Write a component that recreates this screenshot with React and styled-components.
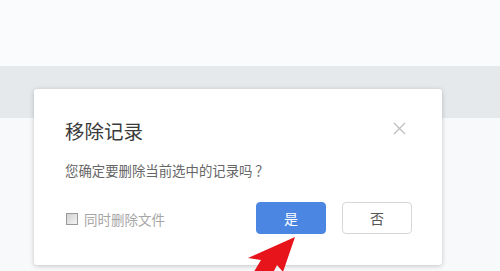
import styled, { createGlobalStyle } from 'styled-components';

const Global = createGlobalStyle`
  html, body { margin: 0; padding: 0; }
  body {
    width: 500px;
    height: 271px;
    overflow: hidden;
    font-family: "Noto Sans CJK SC", "Noto Sans", sans-serif;
  }
`;

const Page = styled.div`
  position: relative;
  width: 500px;
  height: 271px;
  display: flex;
  flex-direction: column;
  background: #f8f9fa;
`;

const TopArea = styled.div`
  height: 66px;
  background: #fafbfc;
`;

const Band = styled.div`
  height: 52px;
  background: #e6e9ec;
`;

const Dialog = styled.div`
  position: absolute;
  left: 34px;
  top: 89px;
  width: 408px;
  height: 176px;
  box-sizing: border-box;
  padding: 27px 30px 31px 31px;
  background: #fff;
  border-radius: 3px;
  box-shadow: 0 1px 5px rgba(0, 0, 0, 0.22);
  display: flex;
  flex-direction: column;
`;

const Title = styled.h2`
  margin: 0;
  font-size: 19.5px;
  line-height: 30px;
  font-weight: 400;
  color: #3a3a3a;
`;

const Close = styled.button`
  position: absolute;
  top: 33px;
  right: 36px;
  width: 13px;
  height: 13px;
  padding: 0;
  border: 0;
  background: none;
  svg { display: block; }
`;

const Message = styled.p`
  margin: 14px 0 0;
  font-size: 13.4px;
  line-height: 20px;
  color: #666;
`;

const Footer = styled.div`
  margin-top: 22px;
  display: flex;
  align-items: center;
`;

const CheckLabel = styled.label`
  flex: 1;
  display: flex;
  align-items: center;
  gap: 6px;
  font-size: 13.5px;
  color: #a6a6a6;
  padding-left: 1px;
  padding-top: 2px;
`;

const Box = styled.span`
  width: 10px;
  height: 10px;
  border: 1px solid #9a9a9a;
  background: linear-gradient(135deg, #d2d2d2, #f4f4f4);
`;

const Button = styled.button`
  width: 70px;
  height: 32px;
  margin-left: ${(p) => (p.$primary ? '0' : '16px')};
  border-radius: 4px;
  border: 1px solid ${(p) => (p.$primary ? '#4a86e2' : '#d6d6d6')};
  background: ${(p) => (p.$primary ? '#4a86e2' : '#fff')};
  color: ${(p) => (p.$primary ? '#fff' : '#555')};
  font-family: inherit;
  font-size: 14px;
  padding: 0;
`;

const Arrow = styled.svg`
  position: absolute;
  left: 0;
  top: 0;
  pointer-events: none;
`;

export default function App() {
  return (
    <>
      <Global />
      <Page>
        <TopArea />
        <Band />
        <Dialog>
          <Title>移除记录</Title>
          <Close aria-label="关闭">
            <svg width="13" height="13" viewBox="0 0 13 13">
              <path d="M1 1L12 12M12 1L1 12" stroke="#bdbdbd" strokeWidth="1.2" />
            </svg>
          </Close>
          <Message>您确定要删除当前选中的记录吗{'\u2009'}？</Message>
          <Footer>
            <CheckLabel>
              <Box />
              同时删除文件
            </CheckLabel>
            <Button $primary>是</Button>
            <Button>否</Button>
          </Footer>
        </Dialog>
        <Arrow width="500" height="271" viewBox="0 0 500 271">
          <polygon
            points="295,237 248,258 261,260 252,275 272,275 277,265 283,272"
            fill="#e8141c"
          />
        </Arrow>
      </Page>
    </>
  );
}
